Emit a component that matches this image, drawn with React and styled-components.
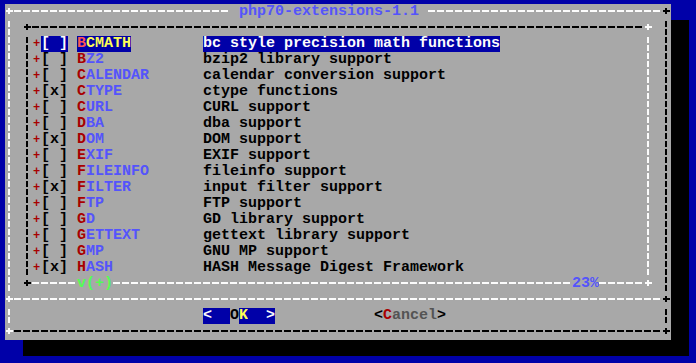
import React from 'react';
import styled, { createGlobalStyle } from 'styled-components';

const CW = 9;
const RH = 16;

const BLUE = '#0000a8';
const GRAY = '#a8a8a8';
const DARK = '#545454';
const BLACK = '#000000';
const WHITE = '#fcfcfc';
const RED = '#a80000';
const LRED = '#fc5454';
const LBLUE = '#5454fc';
const YELLOW = '#fcfc54';
const GREEN = '#54fc54';

const GlobalStyle = createGlobalStyle`
  html, body {
    margin: 0;
    padding: 0;
    background: ${BLUE};
    overflow: hidden;
  }
`;

const Screen = styled.div`
  width: 696px;
  height: 363px;
  box-sizing: border-box;
  padding: 4px 0 0 5px;
  background: ${BLUE};
  font-family: 'Liberation Mono', 'DejaVu Sans Mono', monospace;
  font-size: 15px;
  font-weight: bold;
  overflow: hidden;
`;

const Dialog = styled.div`
  display: flex;
  flex-direction: column;
  width: ${74 * CW}px;
  background: ${GRAY};
  box-shadow: ${2 * CW}px ${RH}px 0 0 ${BLACK};
`;

const Row = styled.div`
  display: flex;
  height: ${RH}px;
`;

const Cell = styled.span`
  display: inline-block;
  flex: none;
  width: ${(p) => p.$cols * CW}px;
  height: ${RH}px;
  line-height: ${RH}px;
  white-space: pre;
  overflow: hidden;
  color: ${(p) => p.$fg || BLACK};
  background: ${(p) => p.$bg || 'transparent'};
`;

const Mark = styled.span`
  display: inline-block;
  height: ${RH}px;
  line-height: ${RH}px;
  white-space: pre;
  color: ${(p) => p.$fg || BLACK};
  background: ${(p) => p.$bg || 'transparent'};
`;

// small '+' glyph of the list rows
const Bullet = styled(Cell)`
  font-size: 12px;
  text-align: center;
`;

// line-drawing pieces of the text-mode frame
const HLine = styled.span`
  display: inline-block;
  flex: none;
  width: ${(p) => p.$cols * CW}px;
  height: ${RH}px;
  background-image: repeating-linear-gradient(
    90deg,
    ${(p) => p.$color} 0 7px,
    transparent 7px ${CW}px
  );
  background-size: 100% 2px;
  background-position: 0 6px;
  background-repeat: no-repeat;
`;

const VBar = styled.span`
  display: inline-block;
  flex: none;
  width: ${CW}px;
  height: ${RH}px;
  background-image: repeating-linear-gradient(
    180deg,
    ${(p) => p.$color} 0 6px,
    transparent 6px 8px
  );
  background-size: 2px ${RH}px;
  background-position: 3px 1px;
  background-repeat: no-repeat;
`;

const Corner = styled.span`
  display: inline-block;
  flex: none;
  width: ${CW}px;
  height: ${RH}px;
  background-image: linear-gradient(${(p) => p.$color}, ${(p) => p.$color}),
    linear-gradient(${(p) => p.$color}, ${(p) => p.$color});
  background-size: 7px 2px, 2px 6px;
  background-position: 1px 6px, 3px 4px;
  background-repeat: no-repeat;
`;

const items = [
  { name: 'BCMATH', on: false, desc: 'bc style precision math functions' },
  { name: 'BZ2', on: false, desc: 'bzip2 library support' },
  { name: 'CALENDAR', on: false, desc: 'calendar conversion support' },
  { name: 'CTYPE', on: true, desc: 'ctype functions' },
  { name: 'CURL', on: false, desc: 'CURL support' },
  { name: 'DBA', on: false, desc: 'dba support' },
  { name: 'DOM', on: true, desc: 'DOM support' },
  { name: 'EXIF', on: false, desc: 'EXIF support' },
  { name: 'FILEINFO', on: false, desc: 'fileinfo support' },
  { name: 'FILTER', on: true, desc: 'input filter support' },
  { name: 'FTP', on: false, desc: 'FTP support' },
  { name: 'GD', on: false, desc: 'GD library support' },
  { name: 'GETTEXT', on: false, desc: 'gettext library support' },
  { name: 'GMP', on: false, desc: 'GNU MP support' },
  { name: 'HASH', on: true, desc: 'HASH Message Digest Framework' },
];

function Sides({ children }) {
  return (
    <Row>
      <VBar $color={WHITE} />
      <Cell $cols={1} />
      {children}
      <Cell $cols={1} />
      <VBar $color={BLACK} />
    </Row>
  );
}

function ItemRow({ item, selected }) {
  const bg = selected ? BLUE : undefined;
  return (
    <Sides>
      <VBar $color={BLACK} />
      <Bullet $cols={1} $fg={RED}>+</Bullet>
      <Cell $cols={3} $fg={selected ? WHITE : BLACK} $bg={bg}>
        {item.on ? '[x]' : '[ ]'}
      </Cell>
      <Cell $cols={1} />
      <Cell $cols={14}>
        <Mark $bg={bg}>
          <Mark $fg={selected ? LRED : RED}>{item.name[0]}</Mark>
          <Mark $fg={selected ? YELLOW : LBLUE}>{item.name.slice(1)}</Mark>
        </Mark>
      </Cell>
      <Cell $cols={49}>
        <Mark $fg={selected ? WHITE : BLACK} $bg={bg}>{item.desc}</Mark>
      </Cell>
      <VBar $color={WHITE} />
    </Sides>
  );
}

export default function App() {
  return (
    <>
      <GlobalStyle />
      <Screen>
        <Dialog>
          <Row>
            <Corner $color={WHITE} />
            <HLine $cols={24} $color={WHITE} />
            <Cell $cols={1} />
            <Cell $cols={20} $fg={LBLUE}>php70-extensions-1.1</Cell>
            <Cell $cols={1} />
            <HLine $cols={26} $color={WHITE} />
            <Corner $color={BLACK} />
          </Row>

          <Sides>
            <Corner $color={BLACK} />
            <HLine $cols={68} $color={BLACK} />
            <Corner $color={WHITE} />
          </Sides>

          {items.map((item, i) => (
            <ItemRow key={item.name} item={item} selected={i === 0} />
          ))}

          <Sides>
            <Corner $color={BLACK} />
            <HLine $cols={5} $color={WHITE} />
            <Cell $cols={4} $fg={GREEN}>v(+)</Cell>
            <HLine $cols={51} $color={WHITE} />
            <Cell $cols={3} $fg={LBLUE}>23%</Cell>
            <HLine $cols={5} $color={WHITE} />
            <Corner $color={WHITE} />
          </Sides>

          <Row>
            <Corner $color={WHITE} />
            <HLine $cols={72} $color={WHITE} />
            <Corner $color={BLACK} />
          </Row>

          <Row>
            <VBar $color={WHITE} />
            <Cell $cols={21} />
            <Cell $cols={8}>
              <Mark $fg={WHITE} $bg={BLUE}>{'<  '}</Mark>
              <Mark $fg={BLACK}>O</Mark>
              <Mark $fg={YELLOW} $bg={BLUE}>K</Mark>
              <Mark $fg={WHITE} $bg={BLUE}>{'  >'}</Mark>
            </Cell>
            <Cell $cols={11} />
            <Cell $cols={8}>
              <Mark $fg={BLACK}>{'<'}</Mark>
              <Mark $fg={RED}>C</Mark>
              <Mark $fg={DARK}>ancel</Mark>
              <Mark $fg={BLACK}>{'>'}</Mark>
            </Cell>
            <Cell $cols={24} />
            <VBar $color={BLACK} />
          </Row>

          <Row>
            <Corner $color={WHITE} />
            <HLine $cols={72} $color={BLACK} />
            <Corner $color={BLACK} />
          </Row>
        </Dialog>
      </Screen>
    </>
  );
}
